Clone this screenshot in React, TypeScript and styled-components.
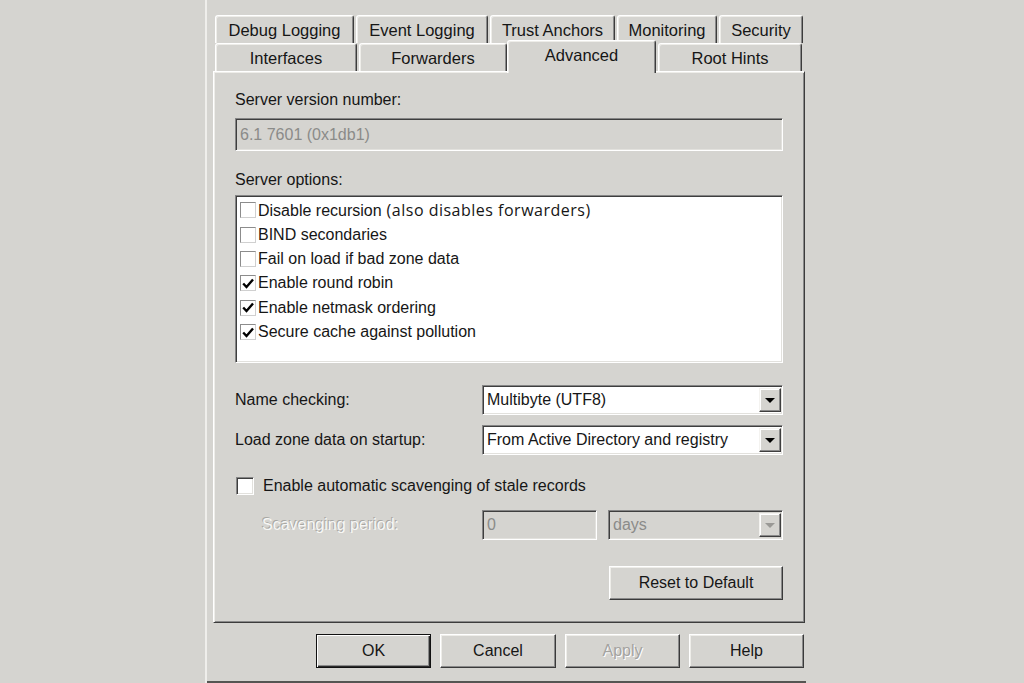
import React from 'react';
import styled, { createGlobalStyle, css } from 'styled-components';

const GlobalStyle = createGlobalStyle`
  html, body { margin: 0; padding: 0; background: #d5d4d0; }
  body { font-family: "Liberation Sans", Arial, sans-serif; }
  #root { width: 1024px; height: 683px; overflow: hidden; }
`;

const BG = '#d5d4d0';
const TEXT = '#161616';

const Page = styled.div`
  width: 1024px;
  height: 683px;
  box-sizing: border-box;
  background: ${BG};
  display: flex;
  padding-left: 205px;
  font-family: "Liberation Sans", Arial, sans-serif;
  font-size: 16px;
  color: ${TEXT};
`;

const Dialog = styled.div`
  width: 601px;
  height: 683px;
  box-sizing: border-box;
  border-left: 2px solid #efeeeb;
  padding: 15px 1px 0 6px;
  display: flex;
  flex-direction: column;
`;

const TabStrip = styled.div`
  display: flex;
  flex-direction: column;
  margin-left: 2px;
`;

const TabRow = styled.div`
  display: flex;
  gap: 2px;
  height: 28px;
`;

const Tab = styled.div<{ $w: number; $sel?: boolean }>`
  width: ${(p) => p.$w}px;
  height: 28px;
  flex-shrink: 0;
  box-sizing: border-box;
  display: flex;
  align-items: center;
  justify-content: center;
  font-size: 16.5px;
  line-height: 20px;
  background: ${BG};
  border: 1px solid;
  border-bottom: none;
  border-color: #ffffff #3c3c3c transparent #ffffff;
  border-radius: 3px 3px 0 0;
  box-shadow: inset 1px 1px 0 #eeede9, inset -1px 0 0 #8a8a8a;
  ${(p) =>
    p.$sel &&
    css`
      height: 33px;
      margin: -3px 0 0 -2px;
      z-index: 1;
      align-items: flex-start;
      padding-top: 4px;
    `}
`;

const Panel = styled.div`
  height: 552px;
  box-sizing: border-box;
  border: 1px solid;
  border-color: #ffffff #3c3c3c #3c3c3c #ffffff;
  box-shadow: inset 1px 1px 0 #eeede9, inset -1px -1px 0 #8a8a8a;
  padding: 18px 21px 0 21px;
  display: flex;
  flex-direction: column;
`;

const Label = styled.div<{ $mt?: number }>`
  line-height: 20px;
  height: 20px;
  margin-top: ${(p) => p.$mt ?? 0}px;
`;

const sunken = css`
  box-sizing: border-box;
  border: 1px solid;
  border-color: #858585 #ffffff #ffffff #858585;
  box-shadow: inset 1px 1px 0 #3e3e3e, inset -1px -1px 0 #e2e1dd;
  padding: 1px;
`;

const Field = styled.div<{ $w?: number; $h: number; $mt?: number; $disabled?: boolean }>`
  ${sunken};
  width: ${(p) => (p.$w ? `${p.$w}px` : 'auto')};
  height: ${(p) => p.$h}px;
  margin-top: ${(p) => p.$mt ?? 0}px;
  flex-shrink: 0;
  display: flex;
  align-items: center;
  padding-left: 4px;
  background: ${(p) => (p.$disabled ? BG : '#ffffff')};
  color: ${(p) => (p.$disabled ? '#8b8b89' : TEXT)};
`;

const ListBox = styled.div`
  ${sunken};
  height: 168px;
  margin-top: 5px;
  background: #ffffff;
  padding: 2px 3px 0 4px;
  display: flex;
  flex-direction: column;
`;

const ListItem = styled.div`
  height: 24.4px;
  display: flex;
  align-items: center;
  gap: 2px;
  white-space: nowrap;
`;

const Aside = styled.span`
  font-family: "Open Sans", "Liberation Sans", sans-serif;
  font-size: 16px;
  letter-spacing: 0.5px;
  margin-left: 5px;
`;

const FlatBox = styled.div`
  width: 16px;
  height: 16px;
  box-sizing: border-box;
  border: 1px solid;
  border-color: #8c8c8c #d0d0d0 #d0d0d0 #8c8c8c;
  background: #ffffff;
  display: flex;
  align-items: center;
  justify-content: center;
  flex-shrink: 0;
`;

const SunkenBox = styled.div`
  ${sunken};
  width: 18px;
  height: 18px;
  background: #ffffff;
  flex-shrink: 0;
`;

const FormRow = styled.div<{ $mt: number; $h: number }>`
  display: flex;
  align-items: center;
  height: ${(p) => p.$h}px;
  margin-top: ${(p) => p.$mt}px;
`;

const RowLabel = styled.div<{ $indent?: number; $disabled?: boolean }>`
  width: 247px;
  flex-shrink: 0;
  box-sizing: border-box;
  padding-left: ${(p) => p.$indent ?? 0}px;
  ${(p) =>
    p.$disabled &&
    css`
      color: #f7f7f5;
      text-shadow: -1px -1px 0 #a9a8a4;
    `}
`;

const CheckRow = styled.div`
  display: flex;
  align-items: center;
  gap: 9px;
  height: 20px;
  margin-top: 21px;
  padding-left: 1px;
`;

const Select = styled.div<{ $w: number; $disabled?: boolean }>`
  ${sunken};
  width: ${(p) => p.$w}px;
  height: 30px;
  flex-shrink: 0;
  display: flex;
  align-items: center;
  justify-content: space-between;
  padding-left: 4px;
  padding-right: 1px;
  background: ${(p) => (p.$disabled ? BG : '#ffffff')};
  color: ${(p) => (p.$disabled ? '#8b8b89' : TEXT)};
`;

const ArrowBtn = styled.div<{ $disabled?: boolean }>`
  width: 22px;
  height: 24px;
  box-sizing: border-box;
  background: ${BG};
  border: 1px solid;
  border-color: #f4f3f0 #3e3e3e #3e3e3e #f4f3f0;
  box-shadow: inset -1px -1px 0 #8a8a8a, inset 1px 1px 0 #ffffff;
  display: flex;
  align-items: center;
  justify-content: center;
  &::after {
    content: '';
    width: 0;
    height: 0;
    border-left: 5px solid transparent;
    border-right: 5px solid transparent;
    border-top: 5px solid ${(p) => (p.$disabled ? '#9a9996' : '#000000')};
  }
`;

const ScavGap = styled.div`
  width: 11px;
  flex-shrink: 0;
`;

const Button = styled.div<{ $w: number; $default?: boolean; $disabled?: boolean }>`
  width: ${(p) => p.$w}px;
  height: 34px;
  box-sizing: border-box;
  display: flex;
  align-items: center;
  justify-content: center;
  background: ${BG};
  border: 1px solid;
  border-color: #ffffff #3a3a3a #3a3a3a #ffffff;
  box-shadow: inset -1px -1px 0 #8a8a8a, inset 1px 1px 0 #eeede9;
  flex-shrink: 0;
  ${(p) =>
    p.$default &&
    css`
      border-color: #111111;
      box-shadow: inset 1px 1px 0 #ffffff, inset -1px -1px 0 #2a2a2a, inset -2px -2px 0 #8a8a8a;
    `}
  ${(p) =>
    p.$disabled &&
    css`
      color: #a4a3a0;
      text-shadow: 1px 1px 0 #ffffff;
    `}
`;

const ResetBtn = styled(Button)`
  align-self: flex-end;
  margin-top: 26px;
`;

const ButtonBar = styled.div`
  display: flex;
  justify-content: flex-end;
  gap: 9px;
  margin-top: 11px;
  margin-right: 1px;
`;

const BottomEdge = styled.div`
  height: 2px;
  margin: 13px -1px 0 -6px;
  background: #555552;
`;

const Check = () => (
  <svg width="12" height="11" viewBox="0 0 12 11">
    <path d="M1.2 5.5 L4.5 9 L11 1.5" fill="none" stroke="#000" strokeWidth="2.4" />
  </svg>
);

const options: { label: string; checked: boolean; aside?: string }[] = [
  { label: 'Disable recursion', checked: false, aside: '(also disables forwarders)' },
  { label: 'BIND secondaries', checked: false },
  { label: 'Fail on load if bad zone data', checked: false },
  { label: 'Enable round robin', checked: true },
  { label: 'Enable netmask ordering', checked: true },
  { label: 'Secure cache against pollution', checked: true },
];

export default function App() {
  return (
    <>
      <GlobalStyle />
      <Page>
        <Dialog>
          <TabStrip>
            <TabRow>
              <Tab $w={139}>Debug Logging</Tab>
              <Tab $w={132}>Event Logging</Tab>
              <Tab $w={125}>Trust Anchors</Tab>
              <Tab $w={100}>Monitoring</Tab>
              <Tab $w={84}>Security</Tab>
            </TabRow>
            <TabRow>
              <Tab $w={142}>Interfaces</Tab>
              <Tab $w={148}>Forwarders</Tab>
              <Tab $w={149} $sel>
                Advanced
              </Tab>
              <Tab $w={144}>Root Hints</Tab>
            </TabRow>
          </TabStrip>
          <Panel>
            <Label>Server version number:</Label>
            <Field $h={33} $mt={8} $disabled>
              6.1 7601 (0x1db1)
            </Field>
            <Label $mt={19}>Server options:</Label>
            <ListBox>
              {options.map((o) => (
                <ListItem key={o.label}>
                  <FlatBox>{o.checked && <Check />}</FlatBox>
                  <span>
                    {o.label}
                    {o.aside && <Aside>{o.aside}</Aside>}
                  </span>
                </ListItem>
              ))}
            </ListBox>
            <FormRow $mt={22} $h={30}>
              <RowLabel>Name checking:</RowLabel>
              <Select $w={301}>
                <span>Multibyte (UTF8)</span>
                <ArrowBtn />
              </Select>
            </FormRow>
            <FormRow $mt={10} $h={30}>
              <RowLabel>Load zone data on startup:</RowLabel>
              <Select $w={301}>
                <span>From Active Directory and registry</span>
                <ArrowBtn />
              </Select>
            </FormRow>
            <CheckRow>
              <SunkenBox />
              <span>Enable automatic scavenging of stale records</span>
            </CheckRow>
            <FormRow $mt={14} $h={30}>
              <RowLabel $indent={27} $disabled>
                Scavenging period:
              </RowLabel>
              <Field $w={115} $h={30} $disabled>
                0
              </Field>
              <ScavGap />
              <Select $w={175} $disabled>
                <span>days</span>
                <ArrowBtn $disabled />
              </Select>
            </FormRow>
            <ResetBtn $w={174}>Reset to Default</ResetBtn>
          </Panel>
          <ButtonBar>
            <Button $w={115} $default>
              OK
            </Button>
            <Button $w={116}>Cancel</Button>
            <Button $w={115} $disabled>
              Apply
            </Button>
            <Button $w={115}>Help</Button>
          </ButtonBar>
          <BottomEdge />
        </Dialog>
      </Page>
    </>
  );
}
